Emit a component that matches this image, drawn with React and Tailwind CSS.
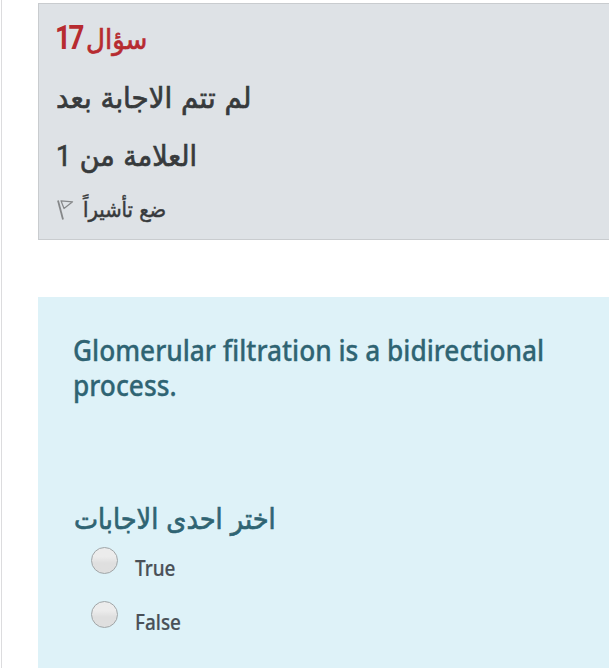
function FlagIcon() {
  return (
    <svg width="18" height="22" viewBox="0 0 18 22" fill="none" stroke="#858789" strokeLinejoin="round">
      <path d="M2 1.5 L7 20.5" strokeWidth="1.8" />
      <path d="M5 1.8 L16.6 2.8 L8 9.5 Z" strokeWidth="1.2" />
    </svg>
  )
}

function Option({ label }) {
  return (
    <label className="flex h-[54px] items-start gap-[17px] pl-[18px]">
      <input
        type="radio"
        name="answer"
        className="h-[27px] w-[27px] shrink-0 appearance-none rounded-full border border-[#a0a5a7] bg-linear-to-b from-[#ececec] from-35% to-[#dfdfdf] to-60%"
      />
      <span className="origin-left pt-[6px] font-['Noto_Sans',sans-serif] text-[22px] leading-[28px] font-medium text-[#495057] scale-x-[0.86] [-webkit-text-stroke:0.2px]">
        {label}
      </span>
    </label>
  )
}

function App() {
  return (
    <div className="flex h-[668px] w-full overflow-hidden bg-white font-['DejaVu_Sans',sans-serif]">
      <div className="ml-px w-px shrink-0 bg-[#dcdcde]" />
      <main className="ml-9 min-w-0 flex-1 pt-[3px]">
        {/* Question info */}
        <section className="flex h-[237px] flex-col items-start border border-r-0 border-[#c9cccf] bg-[#dee2e6] pl-[17px] text-[#373a3c]">
          <h3 dir="rtl" className="mt-[16px] flex h-[38px] items-center text-[28px] leading-[38px] text-[#b72b30]">
            <span className="origin-left pt-[2px] [-webkit-text-stroke:0.7px] scale-x-[0.93]">سؤال</span>
            <span dir="ltr" className="-mt-[3px] -ml-px w-[31px] origin-left font-['Roboto',sans-serif] text-[33px] font-bold tracking-[-3px] scale-x-[0.84]">17</span>
          </h3>
          <div dir="rtl" className="mt-[21px] h-[38px] origin-left text-[29px] leading-[38px] whitespace-nowrap [-webkit-text-stroke:0.7px] scale-x-[0.957]">
            لم تتم الاجابة بعد
          </div>
          <div dir="rtl" className="mt-[20px] h-[38px] origin-left text-[29px] leading-[38px] whitespace-nowrap [-webkit-text-stroke:0.7px] scale-x-[0.93]">
            العلامة من <span className="font-['Roboto',sans-serif] text-[29px]">1</span>
          </div>
          <div className="mt-[18px] flex h-[34px] items-center gap-[9px]">
            <FlagIcon />
            <span dir="rtl" className="origin-left text-[21.5px] leading-[34px] whitespace-nowrap [-webkit-text-stroke:0.5px] scale-x-[0.91]">ضع تأشيراً</span>
          </div>
        </section>

        {/* Question and answers */}
        <section className="mt-[57px] h-[371px] bg-[#def2f8] pt-[36px] pl-[35px] text-[#2f6473]">
          <p className="h-[70px] origin-left font-['Noto_Sans',sans-serif] text-[28px] leading-[35px] font-medium whitespace-nowrap [-webkit-text-stroke:0.3px] scale-x-[0.938]">
            Glomerular filtration is a bidirectional
            <br />
            process.
          </p>
          <div className="mt-[98px] flex h-[46px] pl-px">
            <h4 dir="rtl" className="origin-left text-[28.5px] leading-[38px] whitespace-nowrap [-webkit-text-stroke:0.7px] scale-x-[0.897]">اختر احدى الاجابات</h4>
          </div>
          <Option label="True" />
          <Option label="False" />
        </section>
      </main>
    </div>
  )
}

export default App
